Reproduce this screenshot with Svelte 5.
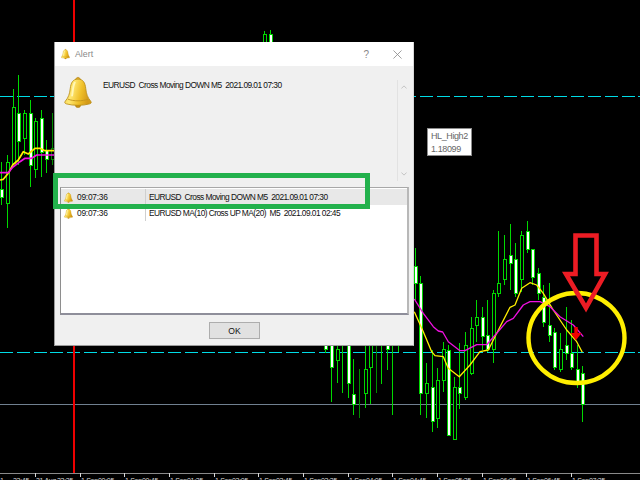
<script>
  // [x, wickTop, wickBottom, bodyTop, bodyBottom, kind]  w = filled, h = hollow, d = dark hollow, l = wick only, k = dark wick only
  const candles = [
    [1,162,205,189,197,'w'],[7,155,228,162,203,'h'],[13,89,165,107,163,'h'],[18,75,165,113,141,'w'],[24,110,155,113,138,'h'],
    [30,100,187,113,165,'w'],[35,118,178,121,169,'h'],[41,110,177,118,152,'w'],[46,140,173,150,159,'w'],[52,113,165,148,159,'d'],
    [264,31,46,34,46,'h'],[270,30,46,34,46,'w'],
    [325,340,353,340,349,'w'],[331,340,402,340,367,'w'],[337,340,383,349,360,'h'],[342,340,393,0,0,'l'],[348,340,398,340,383,'w'],
    [353,359,415,394,404,'w'],[359,369,418,400,401,'k'],[365,340,408,369,393,'h'],[370,340,404,340,367,'h'],[376,340,393,0,0,'k'],
    [381,340,384,0,0,'l'],[387,340,370,340,349,'w'],[392,340,415,0,0,'l'],[398,340,352,0,0,'l'],
    [415,248,300,266,283,'w'],[420,276,415,283,393,'w'],[426,363,418,383,393,'h'],[432,350,432,387,421,'w'],[437,368,428,380,418,'h'],
    [443,342,392,349,380,'h'],[448,345,435,350,435,'w'],[454,377,439,387,439,'h'],[459,343,409,387,393,'w'],[465,332,400,345,397,'h'],
    [471,317,375,328,373,'h'],[476,300,342,317,325,'h'],[482,307,350,317,336,'w'],[487,300,352,335,349,'w'],[493,290,363,293,349,'h'],
    [498,231,297,283,293,'h'],[504,235,285,259,279,'h'],[510,224,290,255,263,'w'],[515,243,297,259,293,'w'],[521,231,292,235,279,'h'],
    [527,221,253,231,249,'w'],[532,249,285,249,277,'w'],[538,268,300,273,293,'w'],[543,285,327,297,322,'w'],[549,283,342,325,335,'w'],
    [554,328,370,332,367,'w'],[560,333,372,349,369,'h'],[566,307,360,345,353,'w'],[571,320,370,353,367,'w'],[577,345,388,369,384,'w'],
    [582,366,422,373,404,'w']
  ];

  const zoomRight = (pts) => pts.map(([x, y]) => `${(x / 3 + 320).toFixed(1)},${(y / 3 + 210).toFixed(1)}`).join(' ');
  const zoomLeft = (pts) => pts.map(([x, y]) => `${(x / 3).toFixed(1)},${(y / 3 + 30).toFixed(1)}`).join(' ');

  const yellowLeft = zoomLeft([[0,450],[10,448],[25,430],[38,405],[55,390],[70,365],[85,372],[105,355],[120,355],[135,362],[163,362]]);
  const magentaLeft = zoomLeft([[0,428],[25,428],[38,412],[60,395],[75,385],[95,385],[110,375],[163,375]]);
  const yellowRight = zoomRight([[283,305],[310,365],[335,425],[345,437],[370,440],[385,475],[418,500],[450,465],[480,425],[505,420],[540,350],[570,292],[585,285],[605,235],[630,218],[650,225],[670,250],[700,300],[740,360],[770,395],[787,427]]);
  const magentaRight = zoomRight([[283,267],[310,310],[340,350],[355,363],[368,366],[385,395],[420,422],[435,422],[470,404],[500,404],[530,370],[560,335],[580,325],[610,285],[630,275],[660,275],[690,290],[720,320],[760,345],[790,380]]);

  // [tick x, day label x, day, time label x, time]
  const ticks = [
    [35,36,'31 Aug',57,'23:25'],[80,81,'1 Sep',98,'00:05'],[124,125,'1 Sep',142,'00:45'],[169,170,'1 Sep',187,'01:25'],
    [214,215,'1 Sep',232,'02:05'],[258,259,'1 Sep',276,'02:45'],[303,304,'1 Sep',321,'03:25'],[348,349,'1 Sep',366,'04:05'],
    [392,393,'1 Sep',410,'04:45'],[437,438,'1 Sep',455,'05:25'],[482,483,'1 Sep',500,'06:05'],[526,527,'1 Sep',544,'06:45'],
    [571,572,'1 Sep',589,'07:25']
  ];

  const rows = [
    { time: '09:07:36', text: 'EURUSD  Cross Moving DOWN M5  2021.09.01 07:30', selected: true },
    { time: '09:07:36', text: 'EURUSD MA(10) Cross UP MA(20)  M5  2021.09.01 02:45', selected: false }
  ];
</script>

{#snippet bell(cls)}
  <svg class={cls} viewBox="0 0 27 31" aria-hidden="true">
    <circle cx="13.5" cy="28" r="2.6" fill="#c98f12" stroke="#a87a10" stroke-width="0.5" />
    <path d="M11.3 3.6 C11.3 0.6 15.7 0.6 15.7 3.6 L15.7 5 L11.3 5 Z" fill="#e2ad2c" stroke="#b5850f" stroke-width="0.7" />
    <path d="M13.5 3 C8.4 3 6.6 6.8 6 12 C5.4 17.5 4.3 20.6 1.2 24.4 C0.2 25.7 0.8 26.6 2.2 27 C9 28.9 18 28.9 24.8 27 C26.2 26.6 26.8 25.7 25.8 24.4 C22.7 20.6 21.6 17.5 21 12 C20.4 6.8 18.6 3 13.5 3 Z" fill="url(#gold)" stroke="#b98c14" stroke-width="0.8" />
    <path d="M3.6 22.4 C9.5 24.6 17.5 24.6 23.4 22.4" fill="none" stroke="#c4951c" stroke-width="0.9" />
    <path d="M10.4 6.4 C8.8 9 8.6 14 7.8 19" fill="none" stroke="#fff7b8" stroke-width="1.8" stroke-linecap="round" />
  </svg>
{/snippet}

<div class="screen">
  <svg class="chart" width="640" height="480" viewBox="0 0 640 480">
    <defs>
      <linearGradient id="gold" x1="0" y1="0" x2="1" y2="0.25">
        <stop offset="0" stop-color="#f2c93a" />
        <stop offset="0.35" stop-color="#ffe873" />
        <stop offset="0.7" stop-color="#efbf28" />
        <stop offset="1" stop-color="#d49a18" />
      </linearGradient>
    </defs>

    <g shape-rendering="crispEdges">
      <line class="dash" x1="0" y1="96.5" x2="640" y2="96.5" />
      <line class="dash" x1="0" y1="352.5" x2="640" y2="352.5" />
      <line class="level" x1="0" y1="404.5" x2="640" y2="404.5" />
      <rect x="73" y="0" width="2.4" height="473" fill="#ee0000" />

      {#each candles as [x, hi, lo, top, bottom, kind]}
        <line class={kind === 'k' || kind === 'd' ? 'wick dark' : 'wick'} x1={x + 0.5} y1={hi} x2={x + 0.5} y2={lo} />
        {#if kind === 'w'}
          <rect class="body filled" x={x - 0.5} y={top + 0.5} width="3" height={bottom - top} />
        {:else if kind === 'h' || kind === 'd'}
          <rect class={kind === 'd' ? 'body hollow dark' : 'body hollow'} x={x - 0.5} y={top + 0.5} width="3" height={bottom - top} />
        {/if}
      {/each}

      <rect x="0" y="473" width="640" height="1.2" fill="#8a8a8a" />
      {#each ticks as [x]}
        <rect x={x} y="473" width="1" height="4" fill="#d8d8d8" />
      {/each}
    </g>

    <text class="axis" x="0" y="483">1</text>
    <text class="axis" x="13" y="483">22:45</text>
    {#each ticks as [, dayX, day, timeX, time]}
      <text class="axis" x={dayX} y="483">{day}</text>
      <text class="axis" x={timeX} y="483">{time}</text>
    {/each}

    <polyline class="ma yellow thick" points={yellowLeft} />
    <polyline class="ma magenta thick" points={magentaLeft} />
    <polyline class="ma yellow" points={yellowRight} />
    <polyline class="ma magenta" points={magentaRight} />

    <path d="M574.3 327 h3.4 v6 h3.8 l-5.5 7.2 l-5.5 -7.2 h3.8 z" fill="#f00000" />
    <ellipse cx="576.5" cy="338" rx="48" ry="45" fill="none" stroke="#ffee00" stroke-width="4.4" />
    <polygon points="575.5,235.5 596.5,235.5 596.5,274 605,274 586,308 566,274 575.5,274" fill="none" stroke="#ed1c24" stroke-width="4.6" />
  </svg>

  <div class="tooltip">
    <span>HL_High2</span>
    <span>1.18099</span>
  </div>

  <div class="dialog">
    <header class="titlebar">
      {@render bell('bell-title')}
      <span class="title">Alert</span>
      <span class="help">?</span>
      <svg class="close" viewBox="0 0 10 10" aria-hidden="true">
        <path d="M0.5 0.5 L9.5 9.5 M9.5 0.5 L0.5 9.5" stroke="#8a8a8a" stroke-width="0.9" fill="none" />
      </svg>
    </header>

    <div class="content">
      <div class="message">
        {@render bell('bell-large')}
        <p>EURUSD&nbsp; Cross Moving DOWN M5&nbsp; 2021.09.01 07:30</p>
        <div class="scroll">
          <svg viewBox="0 0 8 5" aria-hidden="true"><path d="M0.5 4.5 L4 1 L7.5 4.5" /></svg>
          <svg viewBox="0 0 8 5" aria-hidden="true"><path d="M0.5 0.5 L4 4 L7.5 0.5" /></svg>
        </div>
      </div>

      <div class="list">
        {#each rows as row}
          <div class="row" class:selected={row.selected}>
            <div class="cell-time">
              {@render bell('bell-small')}
              <span>{row.time}</span>
            </div>
            <div class="cell-text">{@html row.text.replaceAll('  ', '&nbsp; ')}</div>
          </div>
        {/each}
      </div>

      <div class="footer">
        <button type="button">OK</button>
      </div>
    </div>
  </div>

  <div class="highlight"></div>
</div>

<style>
  :global(body) {
    margin: 0;
    background: #000;
    overflow: hidden;
  }
  .screen {
    position: relative;
    width: 640px;
    height: 480px;
    background: #000;
    overflow: hidden;
    font-family: "Liberation Sans", Arial, sans-serif;
  }
  .chart {
    position: absolute;
    inset: 0;
    display: block;
  }
  .dash {
    stroke: #00dce6;
    stroke-width: 1;
    stroke-dasharray: 13 3.8;
  }
  .level {
    stroke: #708090;
    stroke-width: 1;
  }
  .wick {
    stroke: #00d800;
    stroke-width: 1;
  }
  .wick.dark {
    stroke: #008a00;
  }
  .body {
    stroke: #00d800;
    stroke-width: 1;
  }
  .body.filled {
    fill: #fff;
  }
  .body.hollow {
    fill: #000;
  }
  .body.dark {
    stroke: #008a00;
  }
  .ma {
    fill: none;
    stroke-width: 1.3;
    stroke-linejoin: round;
  }
  .ma.thick {
    stroke-width: 1.7;
  }
  .yellow {
    stroke: #ffee00;
  }
  .magenta {
    stroke: #f010e0;
  }
  .axis {
    font-family: "Liberation Sans", Arial, sans-serif;
    font-size: 7px;
    letter-spacing: -0.3px;
    fill: #d8d8d8;
  }
  .tooltip {
    position: absolute;
    left: 427px;
    top: 128px;
    width: 45px;
    height: 28px;
    box-sizing: border-box;
    border: 1px solid #8c8c8c;
    background: #fff;
    padding: 1px 3px;
    display: flex;
    flex-direction: column;
    font-size: 9px;
    letter-spacing: -0.4px;
    line-height: 12.5px;
    color: #666;
    white-space: nowrap;
  }
  .dialog {
    position: absolute;
    left: 54px;
    top: 42px;
    width: 360px;
    height: 304px;
    box-sizing: border-box;
    display: flex;
    flex-direction: column;
    background: #f0f0f0;
    border-left: 1px solid #9a9a9a;
    border-bottom: 1px solid #9a9a9a;
    border-right: 1px solid #d8d8d8;
  }
  .titlebar {
    flex: none;
    height: 24px;
    display: flex;
    align-items: center;
    background: #fff;
    padding: 0 11px 0 6px;
    color: #888;
  }
  .bell-title {
    width: 9px;
    height: 12px;
    margin-right: 5px;
    margin-top: -1px;
  }
  .title {
    font-size: 8.8px;
    flex: 1;
  }
  .help {
    font-size: 10px;
    margin-right: 24px;
  }
  .close {
    width: 9px;
    height: 9px;
  }
  .content {
    flex: 1;
    min-height: 0;
    display: flex;
    flex-direction: column;
    padding: 0 4px 0 5px;
  }
  .message {
    flex: none;
    height: 121px;
    display: flex;
    align-items: flex-start;
  }
  .bell-large {
    flex: none;
    width: 28px;
    height: 32px;
    margin: 10px 0 0 4px;
  }
  .message p {
    flex: 1;
    margin: 13px 0 0 11px;
    font-size: 8.4px;
    letter-spacing: -0.55px;
    line-height: 12px;
    color: #111;
    white-space: nowrap;
  }
  .scroll {
    flex: none;
    width: 12px;
    height: 101px;
    margin: 14px 0 0 0;
    border-left: 1px solid #e2e2e2;
    display: flex;
    flex-direction: column;
    justify-content: space-between;
    align-items: center;
    padding: 5px 0;
    box-sizing: border-box;
  }
  .scroll svg {
    width: 6px;
    height: 4px;
  }
  .scroll path {
    fill: none;
    stroke: #b4b4b4;
    stroke-width: 1;
  }
  .list {
    flex: none;
    height: 128px;
    box-sizing: border-box;
    background: #fff;
    padding-top: 1px;
    border: 1px solid #8e8e8e;
    border-top-color: #a8a8a8;
    border-right: 2px solid #b8b8b8;
    border-bottom: 2px solid #8e8e9a;
  }
  .row {
    height: 16px;
    display: flex;
    font-size: 8.4px;
    letter-spacing: -0.25px;
    line-height: 16px;
    color: #111;
    white-space: nowrap;
  }
  .row.selected {
    background: #e8e8e8;
  }
  .cell-time {
    flex: none;
    width: 85px;
    box-sizing: border-box;
    display: flex;
    align-items: center;
    padding-left: 3px;
    border-right: 1px solid #cfcfcf;
  }
  .bell-small {
    width: 9px;
    height: 11px;
    margin-right: 4px;
  }
  .cell-text {
    padding-left: 3px;
    letter-spacing: -0.55px;
  }
  .footer {
    flex: 1;
    display: flex;
    justify-content: center;
    align-items: flex-start;
    padding-top: 7px;
  }
  button {
    width: 51px;
    height: 17px;
    padding: 0;
    box-sizing: border-box;
    border: 1px solid #adadad;
    background: #e1e1e1;
    border-radius: 0;
    font: 8.6px "Liberation Sans", Arial, sans-serif;
    color: #111;
  }
  .highlight {
    position: absolute;
    left: 53px;
    top: 173px;
    width: 317px;
    height: 36px;
    box-sizing: border-box;
    border: 5px solid #22b14c;
    pointer-events: none;
  }
</style>
